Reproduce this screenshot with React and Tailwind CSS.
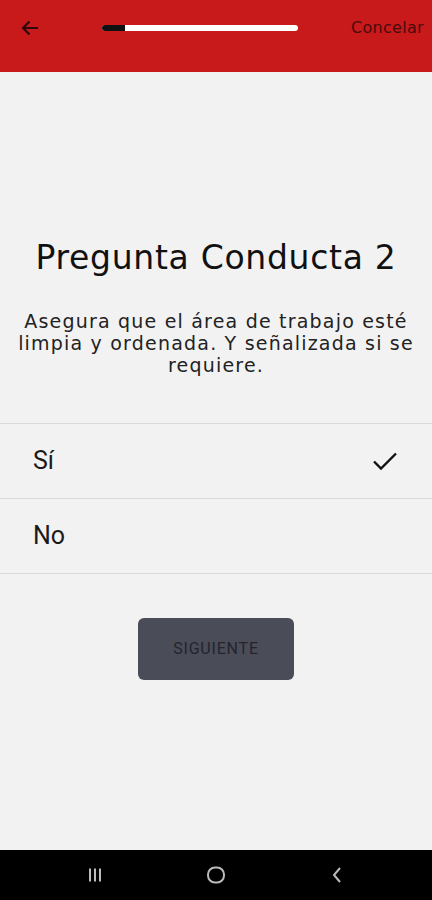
import React from "react";

const rounded = { fontFamily: '"DejaVu Sans", "Open Sans", sans-serif' };
const plain = { fontFamily: 'Roboto, "Noto Sans", sans-serif' };

const Row = ({ label, checked }) => (
  <div className="flex h-[75px] items-center justify-between border-b border-[#d9d9d9] pl-[33px] pr-[34px]">
    <span className="text-[25px] text-[#1a1a1a]" style={plain}>
      {label}
    </span>
    {checked && (
      <svg width="26" height="20" viewBox="0 0 26 20" fill="none">
        <path d="M2 10.5l7 7L24 2.5" stroke="#111" strokeWidth="2.4" />
      </svg>
    )}
  </div>
);

export default function App() {
  return (
    <div className="flex h-[900px] w-[432px] flex-col overflow-hidden bg-[#f2f2f2]">
      {/* header */}
      <div className="flex h-[72px] shrink-0 items-start bg-[#c8191b] pt-[19px]">
        <div className="flex h-[18px] w-[60px] items-center justify-center">
          <svg width="18" height="16" viewBox="0 0 18 16" fill="none">
            <path d="M17 8H2M8.5 1.5L2 8l6.5 6.5" stroke="#2a0a0a" strokeWidth="2" />
          </svg>
        </div>
        <div className="ml-[42px] mt-[6px] flex h-[6px] w-[196px] overflow-hidden rounded-full bg-white">
          <div className="h-full w-[23px] bg-[#111]" />
        </div>
        <span className="ml-auto pr-[8px] text-[16px] leading-[18px] tracking-[0.3px] text-[#4a0b0b]" style={rounded}>
          Concelar
        </span>
      </div>

      {/* question */}
      <div className="flex flex-1 flex-col">
        <h1 className="mt-[167px] text-center text-[33px] leading-[38px] tracking-[0.7px] text-[#111]" style={rounded}>
          Pregunta Conducta 2
        </h1>
        <p className="mx-auto mt-[33px] w-[432px] text-center text-[19px] leading-[22px] tracking-[1.2px] text-[#222]" style={rounded}>
          Asegura que el área de trabajo esté
          <br />
          limpia y ordenada. Y señalizada si se
          <br />
          requiere.
        </p>

        <div className="mt-[47px] border-t border-[#d9d9d9]">
          <Row label="Sí" checked />
          <Row label="No" />
        </div>

        <div className="mt-[44px] flex justify-center">
          <button className="flex h-[62px] w-[156px] items-center justify-center rounded-[6px] bg-[#4a4c58] text-[16px] tracking-[0.8px] text-[#23252d]" style={plain}>
            SIGUIENTE
          </button>
        </div>
      </div>

      {/* nav bar */}
      <div className="flex h-[50px] shrink-0 items-center justify-center bg-black">
        <div className="flex w-[121px] justify-center">
          <svg width="16" height="16" viewBox="0 0 16 16" fill="none">
            <path d="M3 1.5v13M8 1.5v13M13 1.5v13" stroke="#bbb" strokeWidth="2" />
          </svg>
        </div>
        <div className="flex w-[121px] justify-center">
          <svg width="20" height="20" viewBox="0 0 20 20" fill="none">
            <rect x="2" y="2.5" width="16" height="15" rx="7" stroke="#bbb" strokeWidth="2" />
          </svg>
        </div>
        <div className="flex w-[121px] justify-center">
          <svg width="14" height="18" viewBox="0 0 14 18" fill="none">
            <path d="M10 2L4 9l6 7" stroke="#bbb" strokeWidth="2" />
          </svg>
        </div>
      </div>
    </div>
  );
}
